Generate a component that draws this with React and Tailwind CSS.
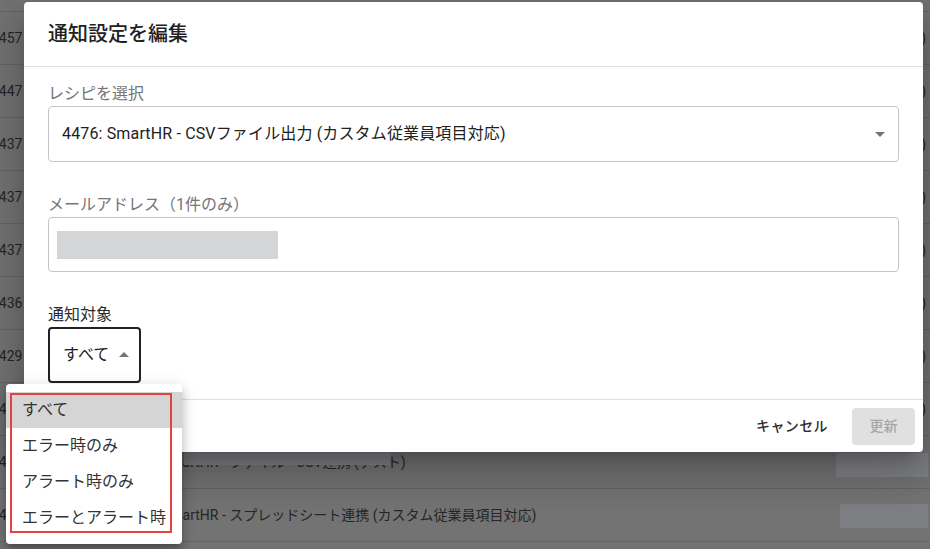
import React from "react";

const rows = [
  { id: "4467", name: "" },
  { id: "4457", name: "" },
  { id: "4447", name: "" },
  { id: "4437", name: "" },
  { id: "4437", name: "" },
  { id: "4437", name: "" },
  { id: "4436", name: "" },
  { id: "4429", name: "" },
  { id: "4428", name: "SmartHR - 従業員一覧 (カスタム)" },
  { id: "4427", name: "SmartHR - ファイル - CSV連携 (テスト)" },
  { id: "4426", name: "SmartHR - スプレッドシート連携 (カスタム従業員項目対応)" },
  { id: "4425", name: "SmartHR - スプレッドシート連携" },
];

const options = ["すべて", "エラー時のみ", "アラート時のみ", "エラーとアラート時"];

const ArrowDrop = ({ up }) => (
  <svg viewBox="0 0 24 24" className={up ? "h-6 w-6 rotate-180" : "h-6 w-6"} fill="#757575">
    <path d="M7 10l5 5 5-5z" />
  </svg>
);

const App = () => {
  return (
    <div className="relative h-[549px] w-[930px] overflow-hidden bg-white font-['Roboto','Noto_Sans_CJK_JP',sans-serif]">
      {/* page underneath */}
      <div className="mt-[-41px]">
        {rows.map((r, i) => (
          <div key={i} className="flex h-[53px] items-center border-b border-[#e0e0e0] text-[14px] text-[#555]">
            <span className="ml-[-9px] w-[171px] shrink-0">{r.id}</span>
            <span className="whitespace-nowrap">{r.name}</span>
            <span className="ml-auto mr-[4px]">)</span>
          </div>
        ))}
      </div>

      <div className="absolute inset-0 bg-black/[0.55]" />

      {/* redaction marks on the page */}
      <div className="absolute left-[184px] top-[446px] h-[19px] w-[206px] bg-[#808185]" />
      <div className="absolute left-[836px] top-[453px] h-[24px] w-[92px] bg-[#7f8185]" />
      <div className="absolute left-[840px] top-[504px] h-[24px] w-[88px] bg-[#7d7f83]" />

      {/* dialog */}
      <div className="absolute left-[24px] top-[2px] w-[899px] rounded bg-white shadow-[0_11px_15px_-7px_rgba(0,0,0,0.2),0_24px_38px_3px_rgba(0,0,0,0.14),0_9px_46px_8px_rgba(0,0,0,0.12)]">
        <div className="flex h-[65px] items-center border-b border-[#e0e0e0] px-6 text-[20px] font-medium text-[#212121]">
          通知設定を編集
        </div>

        <div className="px-6 pb-[16px] pt-[15px]">
          <div className="text-[16px] leading-[24px] text-[#757575]">レシピを選択</div>
          <div className="flex h-[56px] items-center justify-between rounded border border-[#c4c4c4] pl-[13px] pr-[6px] text-[16px] tracking-[0.15px] text-[#212121]">
            <span>4476: SmartHR - CSVファイル出力 (カスタム従業員項目対応)</span>
            <ArrowDrop />
          </div>

          <div className="mt-[31px] text-[16px] leading-[24px] text-[#757575]">メールアドレス（1件のみ）</div>
          <div className="flex h-[55px] items-center rounded border border-[#c4c4c4] pl-[8px]">
            <div className="h-[28px] w-[221px] bg-[#d4d5d7]" />
          </div>

          <div className="mt-[31px] text-[16px] leading-[24px] text-[#2b2b2b]">通知対象</div>
          <div className="flex h-[56px] w-[93px] items-center gap-[3px] rounded border-2 border-[#212121] pl-[13px] text-[16px] text-[#212121]">
            <span>すべて</span>
            <ArrowDrop up />
          </div>
        </div>

        <div className="flex h-[53px] items-center justify-end gap-2 border-t border-[#e0e0e0] pr-2">
          <button className="h-[37px] px-4 text-[14px] font-medium tracking-[0.4px] text-[#2b2b2b]">キャンセル</button>
          <button className="h-[37px] w-[63px] rounded bg-[#e0e0e0] text-[14px] font-medium text-[#a6a6a6]">更新</button>
        </div>
      </div>

      {/* open select menu */}
      <div className="absolute left-[6px] top-[384px] w-[176px] rounded bg-white py-2 shadow-[0_5px_5px_-3px_rgba(0,0,0,0.2),0_8px_10px_1px_rgba(0,0,0,0.14),0_3px_14px_2px_rgba(0,0,0,0.12)]">
        {options.map((o, i) => (
          <div key={o} className={`flex h-[36px] items-center px-4 text-[16px] text-[#333] ${i === 0 ? "bg-[#d5d5d5]" : ""}`}>
            {o}
          </div>
        ))}
      </div>
      <div className="absolute left-[10px] top-[393px] h-[140px] w-[162px] border-2 border-[#e8413f]" />
    </div>
  );
};

export default App;
